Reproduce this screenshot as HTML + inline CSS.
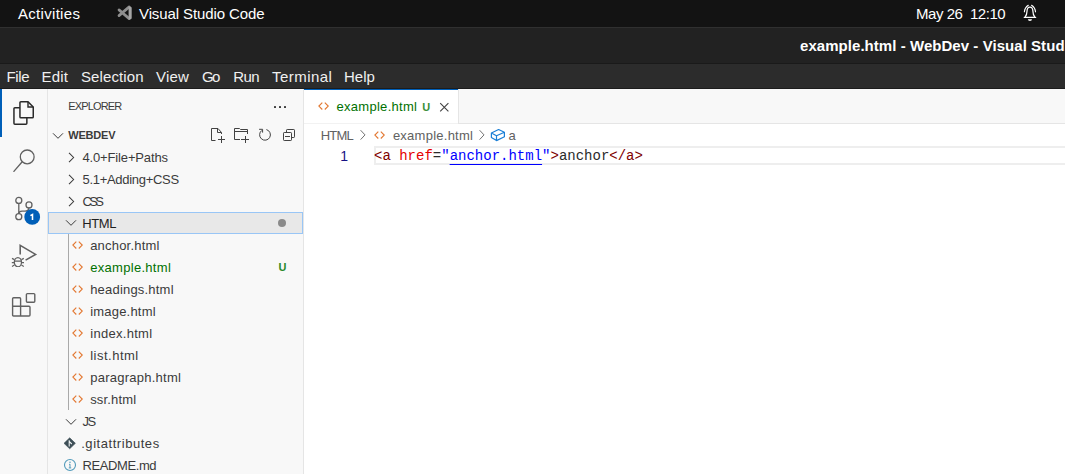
<!DOCTYPE html><html><head><meta charset="utf-8"><style>html,body{margin:0;padding:0;width:1065px;height:474px;overflow:hidden;background:#fff;position:relative}</style></head><body><div style="position:absolute;left:0px;top:0px;width:1065px;height:27px;background:#131313;"></div>
<div style="position:absolute;left:0px;top:27px;width:1065px;height:1px;background:#303030;"></div>
<div style="position:absolute;left:18px;top:6.10px;font-family:'Liberation Sans', sans-serif;font-size:15px;line-height:15px;color:#ffffff;font-weight:400;letter-spacing:0.3px;white-space:pre;">Activities</div>
<svg style="position:absolute;left:114px;top:3px;" width="22" height="20" viewBox="0 0 22 20"><path d="M5 6.9 L15.2 15.6 M5 12.6 L15.2 3.9" stroke="#8e8e8e" stroke-width="2.7" stroke-linecap="round"/><path d="M14.6 3.4 L16.8 3.8 Q17.7 4.1 17.7 5 V15 Q17.7 15.9 16.8 16.2 L14.6 16.6 Z" fill="#a6a6a6"/></svg>
<div style="position:absolute;left:139px;top:6.10px;font-family:'Liberation Sans', sans-serif;font-size:15px;line-height:15px;color:#ffffff;font-weight:400;letter-spacing:-0.1px;white-space:pre;">Visual Studio Code</div>
<div style="position:absolute;left:916px;top:6.10px;font-family:'Liberation Sans', sans-serif;font-size:15px;line-height:15px;color:#ffffff;font-weight:400;letter-spacing:-0.45px;white-space:pre;">May 26  12:10</div>
<svg style="position:absolute;left:1018px;top:2px;" width="24" height="22" viewBox="0 0 24 22"><path d="M6.2 15.3 H17.7 M7.2 14.9 Q8.9 12.5 9 9.2 Q9.1 5.1 11.93 5.1 Q14.8 5.1 14.9 9.2 Q15 12.5 16.7 14.9" fill="none" stroke="#ffffff" stroke-width="1.25" stroke-linecap="round"/><path d="M9.9 17.2 H14 A2.05 1.7 0 0 1 9.9 17.2 Z" fill="#ffffff"/><path d="M6.4 9.8 Q6.8 5.6 10.3 3.3 M17.5 9.8 Q17.1 5.6 13.6 3.3" fill="none" stroke="#ffffff" stroke-width="1.15" stroke-linecap="round"/></svg>
<div style="position:absolute;left:0px;top:28px;width:1065px;height:35px;background:#222222;"></div>
<div style="position:absolute;left:0px;top:63px;width:1065px;height:1px;background:#1a1a1a;"></div>
<div style="position:absolute;left:800px;top:38.10px;font-family:'Liberation Sans', sans-serif;font-size:15px;line-height:15px;color:#ffffff;font-weight:700;letter-spacing:0.05px;white-space:pre;">example.html - WebDev - Visual Studio Code</div>
<div style="position:absolute;left:0px;top:64px;width:1065px;height:24px;background:#2c2c2c;"></div>
<div style="position:absolute;left:0px;top:88px;width:1065px;height:1px;background:#1c1c1c;"></div>
<div style="position:absolute;left:6.5px;top:69.30px;font-family:'Liberation Sans', sans-serif;font-size:15px;line-height:15px;color:#f0f0f0;font-weight:400;letter-spacing:-0.4px;white-space:pre;">File</div>
<div style="position:absolute;left:41.6px;top:69.30px;font-family:'Liberation Sans', sans-serif;font-size:15px;line-height:15px;color:#f0f0f0;font-weight:400;letter-spacing:0.2px;white-space:pre;">Edit</div>
<div style="position:absolute;left:81px;top:69.30px;font-family:'Liberation Sans', sans-serif;font-size:15px;line-height:15px;color:#f0f0f0;font-weight:400;letter-spacing:0.1px;white-space:pre;">Selection</div>
<div style="position:absolute;left:156px;top:69.30px;font-family:'Liberation Sans', sans-serif;font-size:15px;line-height:15px;color:#f0f0f0;font-weight:400;letter-spacing:0.2px;white-space:pre;">View</div>
<div style="position:absolute;left:202px;top:69.30px;font-family:'Liberation Sans', sans-serif;font-size:15px;line-height:15px;color:#f0f0f0;font-weight:400;letter-spacing:-1.6px;white-space:pre;">Go</div>
<div style="position:absolute;left:233.2px;top:69.30px;font-family:'Liberation Sans', sans-serif;font-size:15px;line-height:15px;color:#f0f0f0;font-weight:400;letter-spacing:-0.5px;white-space:pre;">Run</div>
<div style="position:absolute;left:272px;top:69.30px;font-family:'Liberation Sans', sans-serif;font-size:15px;line-height:15px;color:#f0f0f0;font-weight:400;letter-spacing:0.45px;white-space:pre;">Terminal</div>
<div style="position:absolute;left:344px;top:69.30px;font-family:'Liberation Sans', sans-serif;font-size:15px;line-height:15px;color:#f0f0f0;font-weight:400;letter-spacing:0px;white-space:pre;">Help</div>
<div style="position:absolute;left:0px;top:89px;width:47px;height:385px;background:#f8f8f8;"></div>
<div style="position:absolute;left:47px;top:89px;width:1px;height:385px;background:#e5e5e5;"></div>
<div style="position:absolute;left:0px;top:89px;width:2px;height:48px;background:#005fb8;"></div>
<svg style="position:absolute;left:11px;top:99px;" width="26" height="28" viewBox="0 0 26 28"><path d="M9.9 2.75 H17 L22.25 8 V17.9 Q22.25 18.85 21.3 18.85 H9.9 Q8.95 18.85 8.95 17.9 V3.7 Q8.95 2.75 9.9 2.75 Z" fill="none" stroke="#2a2a2a" stroke-width="1.5"/><path d="M17 2.9 V8 H22.1" fill="none" stroke="#2a2a2a" stroke-width="1.4"/><path d="M8.95 8.75 H3.9 Q2.95 8.75 2.95 9.7 V24.3 Q2.95 25.25 3.9 25.25 H14.9 Q15.85 25.25 15.85 24.3 V18.85" fill="none" stroke="#2a2a2a" stroke-width="1.5"/></svg>
<svg style="position:absolute;left:11px;top:147px;" width="24" height="28" viewBox="0 0 24 28"><circle cx="16.2" cy="9.9" r="6.9" fill="none" stroke="#616161" stroke-width="1.3"/><path d="M11.2 14.8 L2.9 24.4" stroke="#616161" stroke-width="1.3" stroke-linecap="round"/></svg>
<svg style="position:absolute;left:10px;top:193px;" width="30" height="32" viewBox="0 0 30 32"><circle cx="8.8" cy="7.4" r="3" fill="none" stroke="#616161" stroke-width="1.3"/><circle cx="19" cy="11.9" r="3" fill="none" stroke="#616161" stroke-width="1.3"/><circle cx="8.8" cy="23.7" r="3" fill="none" stroke="#616161" stroke-width="1.3"/><path d="M8.8 10.4 V20.7" stroke="#616161" stroke-width="1.3"/><path d="M19 14.9 Q18.5 18 15 18.2 H12 Q9 18.3 8.8 20.7" fill="none" stroke="#616161" stroke-width="1.3"/></svg>
<svg style="position:absolute;left:24px;top:209px;" width="17" height="17" viewBox="0 0 17 17"><circle cx="8.2" cy="7.9" r="7.9" fill="#005fb8"/><path d="M6.4 6.7 L8.5 5.5 V11.1" fill="none" stroke="#ffffff" stroke-width="1.55" stroke-linejoin="miter"/></svg>
<svg style="position:absolute;left:10px;top:241px;" width="30" height="26" viewBox="0 0 30 26"><path d="M10.2 13.4 V4.4 L25.6 13.4 L15.6 19.2" fill="none" stroke="#616161" stroke-width="1.55" stroke-linejoin="miter"/><ellipse cx="7.9" cy="21.2" rx="3.6" ry="4.6" fill="none" stroke="#616161" stroke-width="1.3"/><path d="M4.3 20.2 H11.5 M2 17.4 L4.4 18.6 M13.8 17.4 L11.4 18.6 M1.8 21.6 H4.3 M11.5 21.6 H14 M2 25.4 L4.4 24 M13.8 25.4 L11.4 24" fill="none" stroke="#616161" stroke-width="1.2"/></svg>
<svg style="position:absolute;left:10px;top:290px;" width="28" height="30" viewBox="0 0 28 30"><path d="M3.6 7.8 H9.6 Q10.6 7.8 10.6 8.8 V16.2 H19 Q20 16.2 20 17.2 V25 Q20 26 19 26 H3.6 Q2.6 26 2.6 25 V8.8 Q2.6 7.8 3.6 7.8 Z M2.6 16.2 H10.6 V26" fill="none" stroke="#616161" stroke-width="1.4"/><rect x="16.4" y="3.6" width="8.4" height="8.6" rx="1" fill="none" stroke="#616161" stroke-width="1.4"/></svg>
<div style="position:absolute;left:48px;top:89px;width:255px;height:385px;background:#f8f8f8;"></div>
<div style="position:absolute;left:303px;top:89px;width:1px;height:385px;background:#e5e5e5;"></div>
<div style="position:absolute;left:68.3px;top:100.69px;font-family:'Liberation Sans', sans-serif;font-size:11px;line-height:11px;color:#3b3b3b;font-weight:400;letter-spacing:-0.85px;white-space:pre;">EXPLORER</div>
<div style="position:absolute;left:274px;top:106px;width:2px;height:2px;background:#3b3b3b;border-radius:0.5px;"></div>
<div style="position:absolute;left:279px;top:106px;width:2px;height:2px;background:#3b3b3b;border-radius:0.5px;"></div>
<div style="position:absolute;left:284px;top:106px;width:2px;height:2px;background:#3b3b3b;border-radius:0.5px;"></div>
<svg style="position:absolute;left:52px;top:131.8px;" width="12" height="8" viewBox="0 0 12 8"><path d="M1 1.3 L6 6.3 L11 1.3" fill="none" stroke="#3b3b3b" stroke-width="1"/></svg>
<div style="position:absolute;left:68.3px;top:129.69px;font-family:'Liberation Sans', sans-serif;font-size:11px;line-height:11px;color:#3b3b3b;font-weight:700;letter-spacing:-0.2px;white-space:pre;">WEBDEV</div>
<svg style="position:absolute;left:209px;top:127px;" width="18" height="18" viewBox="0 0 18 18"><path d="M6.5 13.5 H2.5 V1.5 H9 L12.5 5.5 V7 M8.5 1.5 V5.5 H12.5 M9 12.5 H16 M12.5 9 V16" fill="none" stroke="#424242" stroke-width="1"/></svg>
<svg style="position:absolute;left:232px;top:127px;" width="18" height="18" viewBox="0 0 18 18"><path d="M8 12.5 H2.5 V1.5 H7.5 L8.5 2.5 H15.5 V7 M2.5 4.5 H15.5 M9 12.5 H17 M13.5 9 V16" fill="none" stroke="#424242" stroke-width="1"/></svg>
<svg style="position:absolute;left:257px;top:127px;" width="16" height="16" viewBox="0 0 16 16"><path d="M9.4 2.58 A5.4 5.4 0 1 1 4.9 3.38" fill="none" stroke="#424242" stroke-width="1"/><path d="M2.1 2.3 H5.6 V5.6" fill="none" stroke="#424242" stroke-width="1"/></svg>
<svg style="position:absolute;left:282px;top:127px;" width="16" height="16" viewBox="0 0 16 16"><path d="M4.5 5.5 V3.2 Q4.5 2.5 5.2 2.5 H11.8 Q12.5 2.5 12.5 3.2 V9.8 Q12.5 10.5 11.8 10.5 H9.5" fill="none" stroke="#424242" stroke-width="1"/><rect x="1.5" y="5.5" width="8" height="8" rx="0.7" fill="none" stroke="#424242" stroke-width="1"/><path d="M3 9.5 H8" stroke="#424242" stroke-width="1"/></svg>
<svg style="position:absolute;left:68px;top:151.5px;" width="8" height="12" viewBox="0 0 8 12"><path d="M1 0.8 L5.6 5.5 L1 10.2" fill="none" stroke="#3b3b3b" stroke-width="1.05"/></svg>
<div style="position:absolute;left:82.5px;top:150.80px;font-family:'Liberation Sans', sans-serif;font-size:13px;line-height:13px;color:#3b3b3b;font-weight:400;letter-spacing:-0.15px;white-space:pre;">4.0+File+Paths</div>
<svg style="position:absolute;left:68px;top:173.5px;" width="8" height="12" viewBox="0 0 8 12"><path d="M1 0.8 L5.6 5.5 L1 10.2" fill="none" stroke="#3b3b3b" stroke-width="1.05"/></svg>
<div style="position:absolute;left:82.5px;top:172.80px;font-family:'Liberation Sans', sans-serif;font-size:13px;line-height:13px;color:#3b3b3b;font-weight:400;letter-spacing:-0.3px;white-space:pre;">5.1+Adding+CSS</div>
<svg style="position:absolute;left:68px;top:195.5px;" width="8" height="12" viewBox="0 0 8 12"><path d="M1 0.8 L5.6 5.5 L1 10.2" fill="none" stroke="#3b3b3b" stroke-width="1.05"/></svg>
<div style="position:absolute;left:82.5px;top:194.80px;font-family:'Liberation Sans', sans-serif;font-size:13px;line-height:13px;color:#3b3b3b;font-weight:400;letter-spacing:-2.6px;white-space:pre;">CSS</div>
<div style="position:absolute;left:48px;top:212px;width:255px;height:22px;background:#e8e8e8;box-sizing:border-box;border:1px solid #99c6f6;"></div>
<svg style="position:absolute;left:65px;top:219px;" width="12" height="8" viewBox="0 0 12 8"><path d="M1 1.3 L6 6.3 L11 1.3" fill="none" stroke="#3b3b3b" stroke-width="1"/></svg>
<div style="position:absolute;left:82.2px;top:216.80px;font-family:'Liberation Sans', sans-serif;font-size:13px;line-height:13px;color:#1f1f1f;font-weight:400;letter-spacing:-0.4px;white-space:pre;">HTML</div>
<div style="position:absolute;left:278px;top:219px;width:8px;height:8px;background:#8a8a8a;border-radius:4px;"></div>
<div style="position:absolute;left:68px;top:234px;width:1px;height:176px;background:#a9a9a9;"></div>
<svg style="position:absolute;left:71.5px;top:240px;" width="12" height="10" viewBox="0 0 12 10"><path d="M4.3 1.7 L0.9 5.1 L4.3 8.5 M6.8 1.7 L10.2 5.1 L6.8 8.5" fill="none" stroke="#e37933" stroke-width="1.15" stroke-linejoin="miter"/></svg>
<div style="position:absolute;left:90.2px;top:238.80px;font-family:'Liberation Sans', sans-serif;font-size:13px;line-height:13px;color:#3b3b3b;font-weight:400;letter-spacing:0.2px;white-space:pre;">anchor.html</div>
<svg style="position:absolute;left:71.5px;top:262px;" width="12" height="10" viewBox="0 0 12 10"><path d="M4.3 1.7 L0.9 5.1 L4.3 8.5 M6.8 1.7 L10.2 5.1 L6.8 8.5" fill="none" stroke="#e37933" stroke-width="1.15" stroke-linejoin="miter"/></svg>
<div style="position:absolute;left:90.2px;top:260.80px;font-family:'Liberation Sans', sans-serif;font-size:13px;line-height:13px;color:#007100;font-weight:400;letter-spacing:0.3px;white-space:pre;">example.html</div>
<svg style="position:absolute;left:71.5px;top:284px;" width="12" height="10" viewBox="0 0 12 10"><path d="M4.3 1.7 L0.9 5.1 L4.3 8.5 M6.8 1.7 L10.2 5.1 L6.8 8.5" fill="none" stroke="#e37933" stroke-width="1.15" stroke-linejoin="miter"/></svg>
<div style="position:absolute;left:90.2px;top:282.80px;font-family:'Liberation Sans', sans-serif;font-size:13px;line-height:13px;color:#3b3b3b;font-weight:400;letter-spacing:0.2px;white-space:pre;">headings.html</div>
<svg style="position:absolute;left:71.5px;top:306px;" width="12" height="10" viewBox="0 0 12 10"><path d="M4.3 1.7 L0.9 5.1 L4.3 8.5 M6.8 1.7 L10.2 5.1 L6.8 8.5" fill="none" stroke="#e37933" stroke-width="1.15" stroke-linejoin="miter"/></svg>
<div style="position:absolute;left:90.2px;top:304.80px;font-family:'Liberation Sans', sans-serif;font-size:13px;line-height:13px;color:#3b3b3b;font-weight:400;letter-spacing:0.2px;white-space:pre;">image.html</div>
<svg style="position:absolute;left:71.5px;top:328px;" width="12" height="10" viewBox="0 0 12 10"><path d="M4.3 1.7 L0.9 5.1 L4.3 8.5 M6.8 1.7 L10.2 5.1 L6.8 8.5" fill="none" stroke="#e37933" stroke-width="1.15" stroke-linejoin="miter"/></svg>
<div style="position:absolute;left:90.2px;top:326.80px;font-family:'Liberation Sans', sans-serif;font-size:13px;line-height:13px;color:#3b3b3b;font-weight:400;letter-spacing:0.3px;white-space:pre;">index.html</div>
<svg style="position:absolute;left:71.5px;top:350px;" width="12" height="10" viewBox="0 0 12 10"><path d="M4.3 1.7 L0.9 5.1 L4.3 8.5 M6.8 1.7 L10.2 5.1 L6.8 8.5" fill="none" stroke="#e37933" stroke-width="1.15" stroke-linejoin="miter"/></svg>
<div style="position:absolute;left:90.2px;top:348.80px;font-family:'Liberation Sans', sans-serif;font-size:13px;line-height:13px;color:#3b3b3b;font-weight:400;letter-spacing:0.5px;white-space:pre;">list.html</div>
<svg style="position:absolute;left:71.5px;top:372px;" width="12" height="10" viewBox="0 0 12 10"><path d="M4.3 1.7 L0.9 5.1 L4.3 8.5 M6.8 1.7 L10.2 5.1 L6.8 8.5" fill="none" stroke="#e37933" stroke-width="1.15" stroke-linejoin="miter"/></svg>
<div style="position:absolute;left:90.2px;top:370.80px;font-family:'Liberation Sans', sans-serif;font-size:13px;line-height:13px;color:#3b3b3b;font-weight:400;letter-spacing:0.25px;white-space:pre;">paragraph.html</div>
<svg style="position:absolute;left:71.5px;top:394px;" width="12" height="10" viewBox="0 0 12 10"><path d="M4.3 1.7 L0.9 5.1 L4.3 8.5 M6.8 1.7 L10.2 5.1 L6.8 8.5" fill="none" stroke="#e37933" stroke-width="1.15" stroke-linejoin="miter"/></svg>
<div style="position:absolute;left:90.2px;top:392.80px;font-family:'Liberation Sans', sans-serif;font-size:13px;line-height:13px;color:#3b3b3b;font-weight:400;letter-spacing:0.15px;white-space:pre;">ssr.html</div>
<div style="position:absolute;left:278.5px;top:262.19px;font-family:'Liberation Sans', sans-serif;font-size:11px;line-height:11px;color:#2a8a2a;font-weight:700;letter-spacing:0px;white-space:pre;">U</div>
<svg style="position:absolute;left:64.5px;top:418px;" width="12" height="8" viewBox="0 0 12 8"><path d="M1 1.3 L6 6.3 L11 1.3" fill="none" stroke="#3b3b3b" stroke-width="1"/></svg>
<div style="position:absolute;left:82.5px;top:414.80px;font-family:'Liberation Sans', sans-serif;font-size:13px;line-height:13px;color:#3b3b3b;font-weight:400;letter-spacing:-1.6px;white-space:pre;">JS</div>
<svg style="position:absolute;left:62px;top:436px;" width="15" height="15" viewBox="0 0 15 15"><path d="M7.7 1.8 L13.4 7.3 L7.7 12.8 L2 7.3 Z" fill="#3d4e56" stroke="#3d4e56" stroke-width="0.6" stroke-linejoin="round"/><path d="M7.2 4.3 V10.4 M7.4 5.6 L9.8 8" stroke="#f0f4f5" stroke-width="1.1"/></svg>
<div style="position:absolute;left:81.2px;top:436.80px;font-family:'Liberation Sans', sans-serif;font-size:13px;line-height:13px;color:#3b3b3b;font-weight:400;letter-spacing:0.55px;white-space:pre;">.gitattributes</div>
<svg style="position:absolute;left:62px;top:458px;" width="16" height="14" viewBox="0 0 16 14"><circle cx="8" cy="7" r="5.5" fill="none" stroke="#519aba" stroke-width="1.1"/><path d="M8 6.3 V9.8 M7 6.3 H8.2 M6.8 9.9 H9.2" stroke="#519aba" stroke-width="1"/><circle cx="8" cy="4.2" r="0.75" fill="#519aba"/></svg>
<div style="position:absolute;left:82.5px;top:458.80px;font-family:'Liberation Sans', sans-serif;font-size:13px;line-height:13px;color:#3b3b3b;font-weight:400;letter-spacing:-0.4px;white-space:pre;">README.md</div>
<div style="position:absolute;left:304px;top:89px;width:761px;height:385px;background:#ffffff;"></div>
<div style="position:absolute;left:304px;top:89px;width:761px;height:34px;background:#f8f8f8;"></div>
<div style="position:absolute;left:304px;top:123px;width:761px;height:1px;background:#e5e5e5;"></div>
<div style="position:absolute;left:304px;top:89px;width:154px;height:35px;background:#ffffff;"></div>
<div style="position:absolute;left:304px;top:123px;width:154px;height:1px;background:#f2f2f2;"></div>
<div style="position:absolute;left:304px;top:89px;width:154px;height:1px;background:#005fb8;"></div>
<div style="position:absolute;left:458px;top:89px;width:1px;height:34px;background:#e5e5e5;"></div>
<svg style="position:absolute;left:318px;top:101px;" width="12" height="10" viewBox="0 0 12 10"><path d="M4.3 1.7 L0.9 5.1 L4.3 8.5 M6.8 1.7 L10.2 5.1 L6.8 8.5" fill="none" stroke="#e37933" stroke-width="1.15" stroke-linejoin="miter"/></svg>
<div style="position:absolute;left:336.4px;top:99.70px;font-family:'Liberation Sans', sans-serif;font-size:13px;line-height:13px;color:#007100;font-weight:400;letter-spacing:0.3px;white-space:pre;">example.html</div>
<div style="position:absolute;left:422.2px;top:101.59px;font-family:'Liberation Sans', sans-serif;font-size:11px;line-height:11px;color:#3a8f3a;font-weight:700;letter-spacing:0px;white-space:pre;">U</div>
<svg style="position:absolute;left:438px;top:101px;" width="12" height="12" viewBox="0 0 12 12"><path d="M2.2 2.2 L10.4 10.4 M10.4 2.2 L2.2 10.4" stroke="#424242" stroke-width="1.1"/></svg>
<div style="position:absolute;left:320.7px;top:128.50px;font-family:'Liberation Sans', sans-serif;font-size:13px;line-height:13px;color:#616161;font-weight:400;letter-spacing:-0.8px;white-space:pre;">HTML</div>
<svg style="position:absolute;left:359px;top:129px;" width="8" height="12" viewBox="0 0 8 12"><path d="M1.6 1.2 L6 5.9 L1.6 10.6" fill="none" stroke="#616161" stroke-width="0.9"/></svg>
<svg style="position:absolute;left:374px;top:130px;" width="12" height="10" viewBox="0 0 12 10"><path d="M4.3 1.7 L0.9 5.1 L4.3 8.5 M6.8 1.7 L10.2 5.1 L6.8 8.5" fill="none" stroke="#e37933" stroke-width="1.15" stroke-linejoin="miter"/></svg>
<div style="position:absolute;left:392.9px;top:128.50px;font-family:'Liberation Sans', sans-serif;font-size:13px;line-height:13px;color:#616161;font-weight:400;letter-spacing:0.25px;white-space:pre;">example.html</div>
<svg style="position:absolute;left:478px;top:129px;" width="8" height="12" viewBox="0 0 8 12"><path d="M1.6 1.2 L6 5.9 L1.6 10.6" fill="none" stroke="#616161" stroke-width="0.9"/></svg>
<svg style="position:absolute;left:489px;top:127px;" width="17" height="16" viewBox="0 0 17 16"><path d="M2.4 6 L9.6 2.5 L15.4 5.3 V9.8 L7.5 13.6 L2.4 10.4 Z M2.4 6 L7.5 8.7 L15.4 5.3 M7.5 8.7 V13.6" fill="none" stroke="#1a7fd6" stroke-width="1.2" stroke-linejoin="round"/></svg>
<div style="position:absolute;left:508.4px;top:128.50px;font-family:'Liberation Sans', sans-serif;font-size:13px;line-height:13px;color:#616161;font-weight:400;letter-spacing:0px;white-space:pre;">a</div>
<div style="position:absolute;left:374px;top:146px;width:691px;height:19px;background:transparent;box-sizing:border-box;border:2px solid #eeeeee;border-right:none;"></div>
<div style="position:absolute;left:340.3px;top:148.75px;font-family:'Liberation Sans', sans-serif;font-size:14px;line-height:14px;color:#171184;font-weight:400;letter-spacing:0px;white-space:pre;">1</div>
<div style="position:absolute;left:374px;top:148.67px;font-family:'Liberation Mono', monospace;font-size:14px;line-height:14px;color:#2b2b2b;font-weight:400;letter-spacing:0px;white-space:pre;"><span style="color:#800000">&lt;a</span> <span style="color:#e50000">href</span>=<span style="color:#0000ff">"<span style="text-decoration:underline;text-decoration-color:#0000ff;text-underline-offset:3.6px;">anchor.html</span>"</span><span style="color:#800000">&gt;</span>anchor<span style="color:#800000">&lt;/a&gt;</span></div></body></html>
